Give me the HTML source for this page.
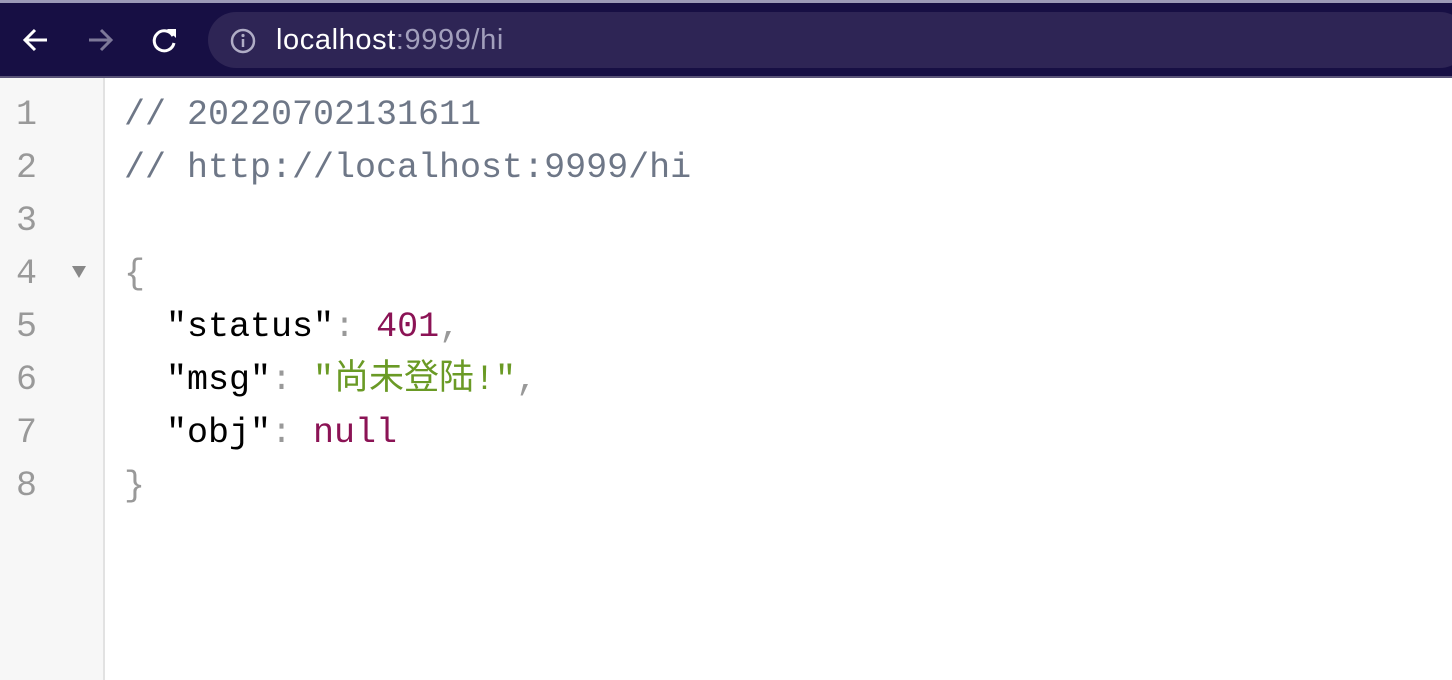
<!DOCTYPE html>
<html><head><meta charset="utf-8"><style>
*{margin:0;padding:0;box-sizing:border-box}
body{width:1452px;height:680px;overflow:hidden;background:#fff;position:relative;font-family:"Liberation Sans",sans-serif}
.top{position:absolute;left:0;top:0;width:1452px;height:3px;background:#9c9ab8}
.bar{position:absolute;left:0;top:3px;width:1452px;height:73px;background:#170f44}
.line{position:absolute;left:0;top:76px;width:1452px;height:2px;background:#5a5478}
.url{position:absolute;left:208px;top:12px;width:1260px;height:56px;border-radius:28px;background:#2e2555}
.urltext{position:absolute;left:276px;top:23px;font-size:29px;line-height:34px;color:#fff;letter-spacing:0.6px}
.urltext span{color:#a29fbc}
.gutter{position:absolute;left:0;top:78px;width:105px;height:602px;background:#f7f7f7;border-right:2px solid #e2e2e2}
.code{position:absolute;top:89px;font-family:"Liberation Mono","Noto Sans CJK SC",monospace;font-size:35px;line-height:53px;white-space:pre}
.ln{left:16px;color:#999}
.src{left:124px;color:#000}
.c{color:#6e7787}.p{color:#999}.n{color:#8b1355}.s{color:#6a9a25}
.tri{position:absolute;left:72px;top:266px;width:0;height:0;border-left:7px solid transparent;border-right:7px solid transparent;border-top:12px solid #888}
</style></head><body>
<div class="top"></div><div class="bar"></div><div class="line"></div>
<div class="url"></div>
<svg style="position:absolute;left:20px;top:24px" width="32" height="32" viewBox="0 0 32 32"><path d="M27 16H6M15 6L5 16l10 10" stroke="#fff" stroke-width="3" fill="none"/></svg>
<svg style="position:absolute;left:84px;top:24px" width="32" height="32" viewBox="0 0 32 32"><path d="M5 16h21M17 6l10 10-10 10" stroke="#7d7899" stroke-width="3" fill="none"/></svg>
<svg style="position:absolute;left:148px;top:24px" width="32" height="32" viewBox="0 0 32 32"><path d="M25 12A10 10 0 1 0 26 19" stroke="#fff" stroke-width="3" fill="none"/><path d="M19 5h9v9z" fill="#fff"/></svg>
<svg style="position:absolute;left:229px;top:27px" width="28" height="28" viewBox="0 0 28 28"><circle cx="14" cy="14" r="11" stroke="#b0adc6" stroke-width="2.5" fill="none"/><path d="M14 12v8" stroke="#b0adc6" stroke-width="2.5"/><circle cx="14" cy="8.5" r="1.6" fill="#b0adc6"/></svg>
<div class="urltext">localhost<span>:9999/hi</span></div>
<div class="gutter"></div>
<div class="code ln">1
2
3
4
5
6
7
8</div>
<div class="tri"></div>
<div class="code src"><span class="c">// 20220702131611</span>
<span class="c">// http://localhost:9999/hi</span>

<span class="p">{</span>
  "status"<span class="p">: </span><span class="n">401</span><span class="p">,</span>
  "msg"<span class="p">: </span><span class="s">"尚未登陆!"</span><span class="p">,</span>
  "obj"<span class="p">: </span><span class="n">null</span>
<span class="p">}</span></div>
</body></html>
